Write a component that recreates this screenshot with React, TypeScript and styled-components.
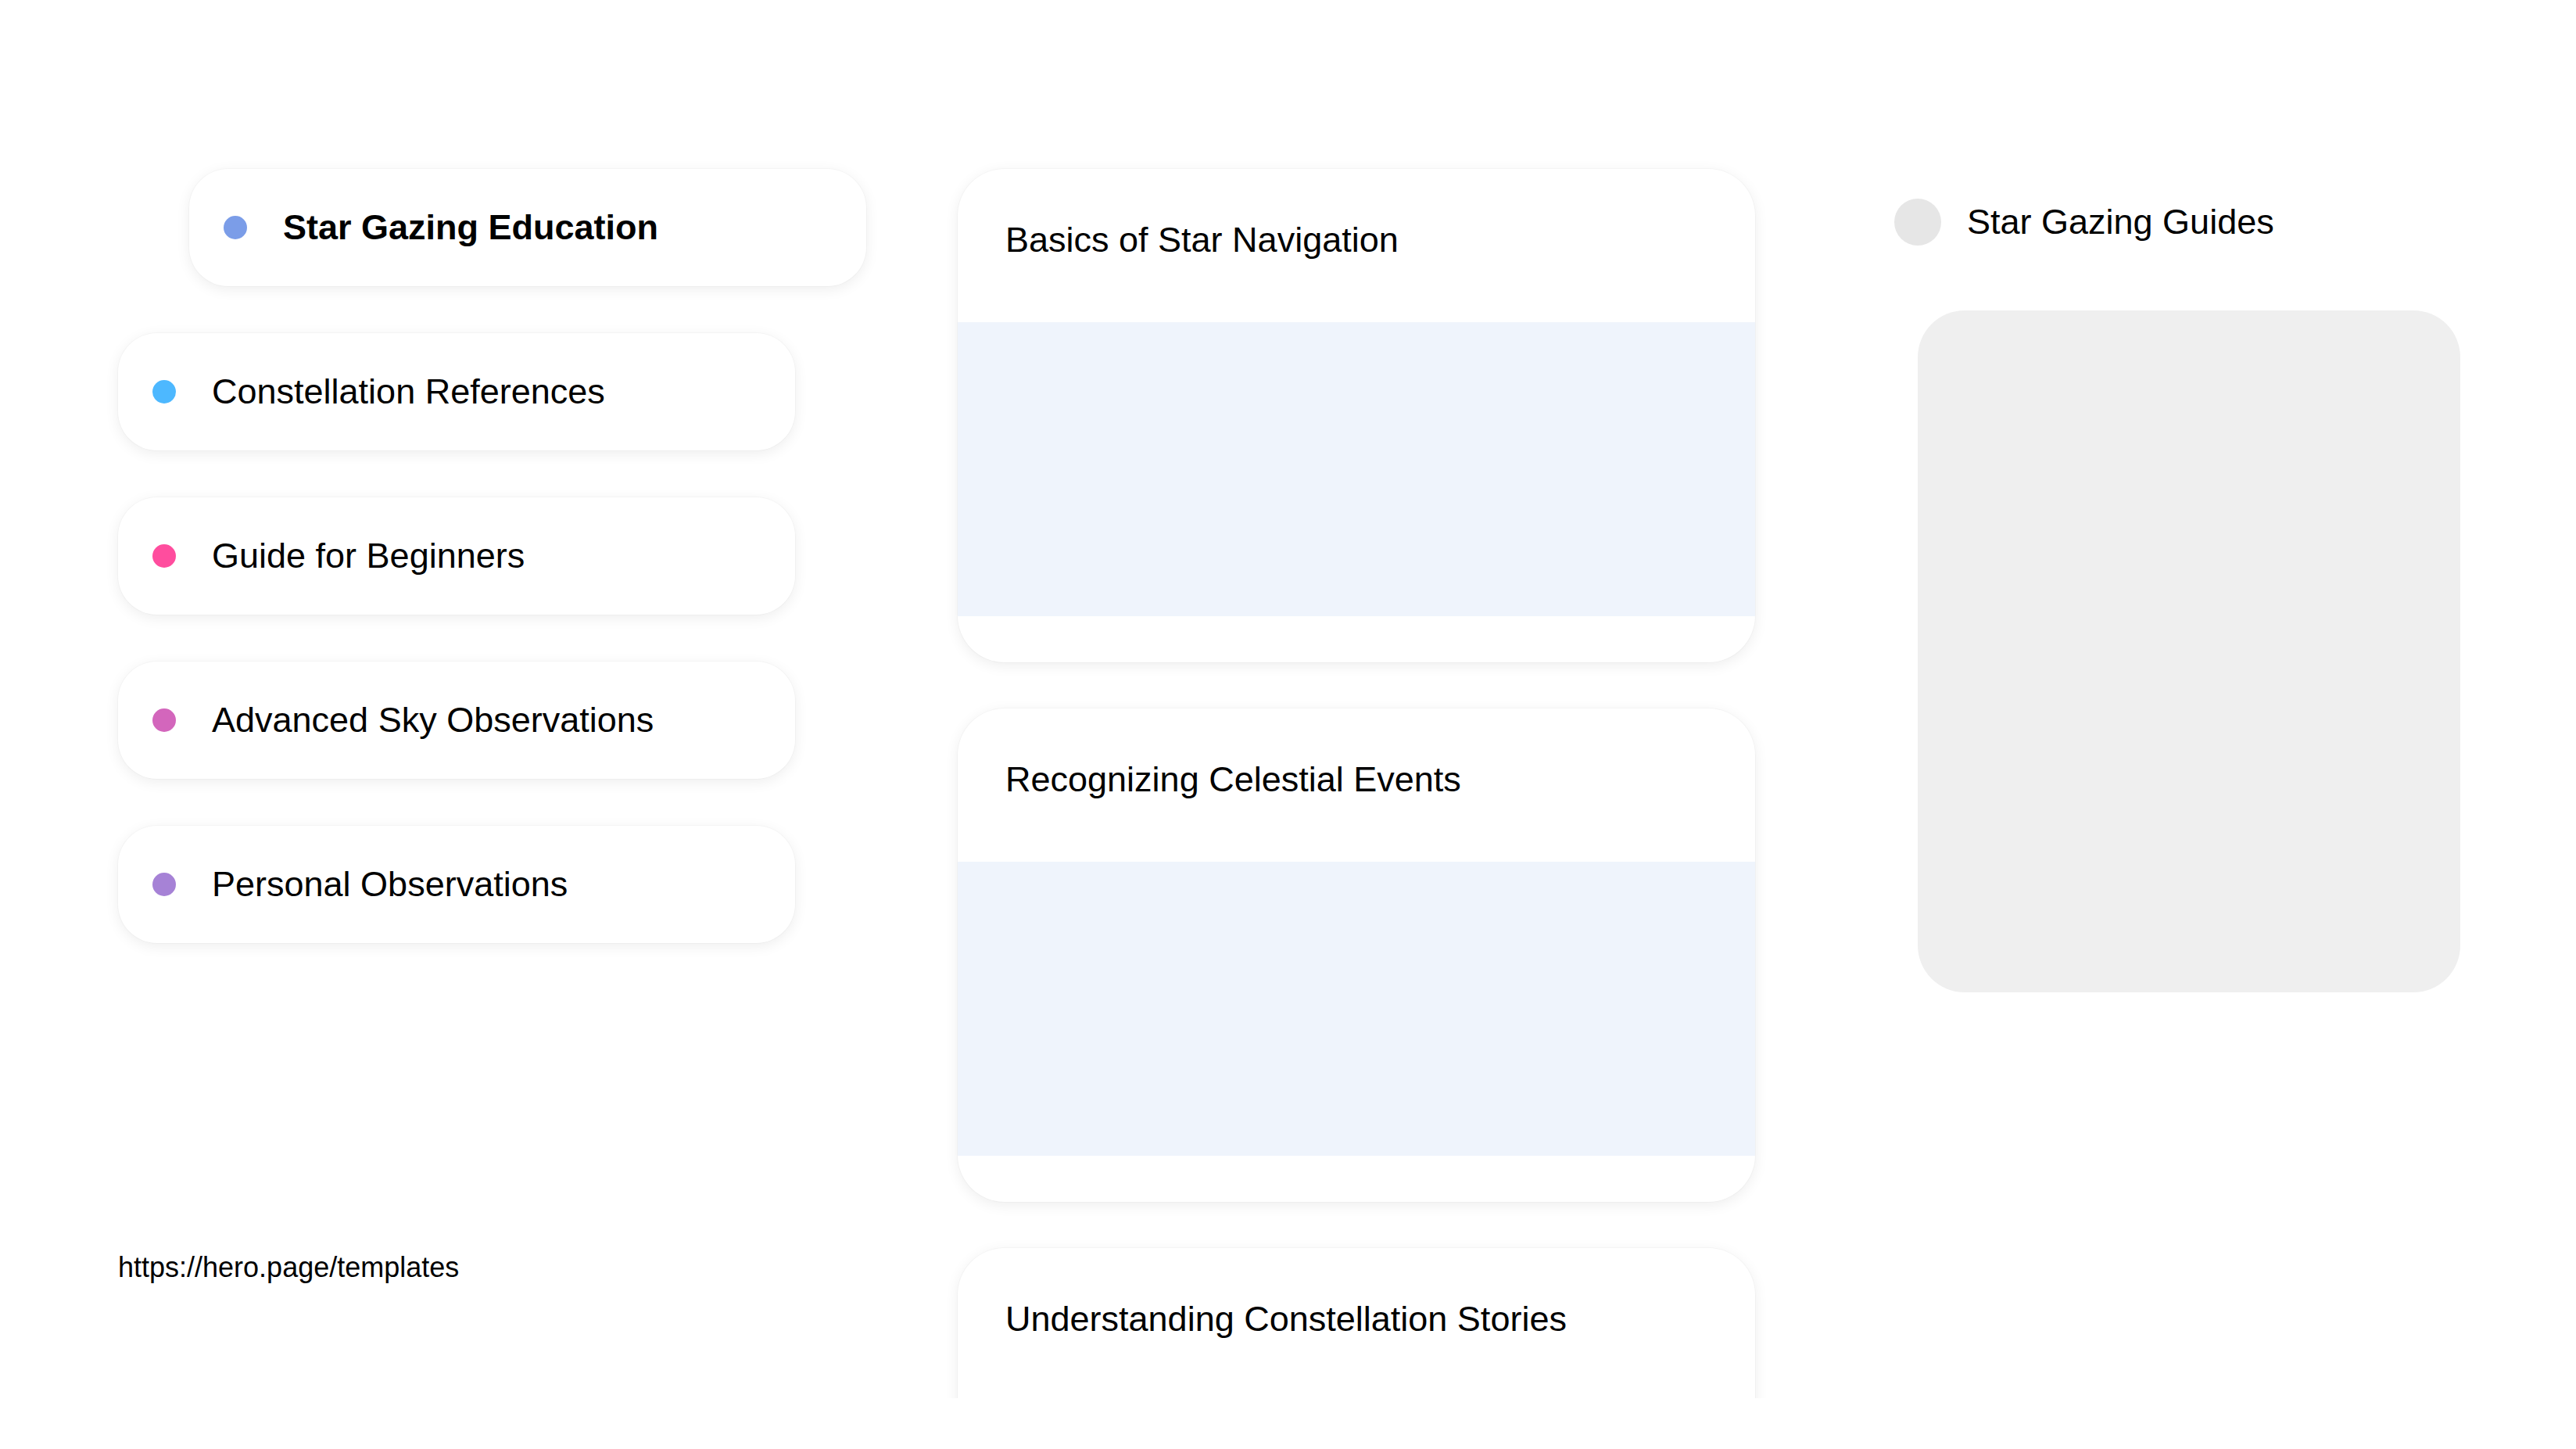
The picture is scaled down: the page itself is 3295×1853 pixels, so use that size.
import styled, { createGlobalStyle } from 'styled-components';

const GlobalStyle = createGlobalStyle`
  * {
    box-sizing: border-box;
  }
  html, body {
    margin: 0;
    padding: 0;
    background: #ffffff;
    font-family: 'Liberation Sans', Arial, sans-serif;
    color: #000000;
  }
`;

const Page = styled.main`
  height: 100vh;
  padding: 216px 146px 65px 151px;
  display: flex;
  align-items: stretch;
`;

const LeftColumn = styled.nav`
  width: 958px;
  flex: none;
  display: flex;
  flex-direction: column;
`;

const PillList = styled.ul`
  list-style: none;
  margin: 0;
  padding: 0;
  display: flex;
  flex-direction: column;
  gap: 60px;
`;

const Pill = styled.li<{ $active?: boolean }>`
  width: 866px;
  height: 150px;
  margin-left: ${(p) => (p.$active ? '91px' : '0')};
  padding: 0 44px;
  display: flex;
  align-items: center;
  gap: 46px;
  background: #ffffff;
  border-radius: 50px;
  box-shadow: 0 0 0 1px rgba(0, 0, 0, 0.025), 0 4px 18px rgba(0, 0, 0, 0.07);
  font-size: 45px;
  font-weight: ${(p) => (p.$active ? 700 : 400)};
`;

const Dot = styled.span<{ $color: string }>`
  width: 30px;
  height: 30px;
  flex: none;
  border-radius: 50%;
  background: ${(p) => p.$color};
`;

const FooterLink = styled.a`
  margin-top: auto;
  margin-bottom: 146px;
  font-size: 36px;
  color: #000000;
  text-decoration: none;
`;

/* the extra 30px round the cards keeps their shadows inside the clip */
const MiddleColumn = styled.section`
  width: 1080px;
  flex: none;
  margin: -30px 148px 0 86px;
  padding: 30px 30px 0;
  overflow: hidden;
  display: flex;
  flex-direction: column;
  gap: 59px;
`;

const Card = styled.article`
  flex: none;
  width: 1020px;
  height: 631px;
  background: #ffffff;
  border-radius: 60px;
  overflow: hidden;
  box-shadow: 0 0 0 1px rgba(0, 0, 0, 0.025), 0 4px 18px rgba(0, 0, 0, 0.07);
  display: flex;
  flex-direction: column;
`;

const CardHeader = styled.header`
  height: 196px;
  padding: 65px 61px 0;
`;

const CardTitle = styled.h3`
  margin: 0;
  font-size: 45px;
  font-weight: 400;
  line-height: 52px;
`;

const CardMedia = styled.div`
  height: 376px;
  background: #eff4fc;
`;

const RightColumn = styled.aside`
  width: 726px;
  flex: none;
  padding-top: 38px;
  display: flex;
  flex-direction: column;
`;

const GuideHeader = styled.div`
  display: flex;
  align-items: center;
  gap: 33px;
  height: 60px;
`;

const Avatar = styled.span`
  width: 60px;
  height: 60px;
  border-radius: 50%;
  background: #e6e6e6;
  flex: none;
`;

const GuideTitle = styled.h2`
  margin: 0;
  font-size: 45px;
  font-weight: 400;
`;

const GuidePanel = styled.div`
  margin: 83px 0 0 30px;
  width: 694px;
  height: 872px;
  border-radius: 60px;
  background: #efefef;
`;

const topics = [
  { label: 'Star Gazing Education', color: '#7b9de8', active: true },
  { label: 'Constellation References', color: '#4db8ff' },
  { label: 'Guide for Beginners', color: '#ff4d9e' },
  { label: 'Advanced Sky Observations', color: '#d366bc' },
  { label: 'Personal Observations', color: '#a682d6' },
];

const lessons = [
  'Basics of Star Navigation',
  'Recognizing Celestial Events',
  'Understanding Constellation Stories',
];

export default function App() {
  return (
    <>
      <GlobalStyle />
      <Page>
        <LeftColumn>
          <PillList>
            {topics.map((t) => (
              <Pill key={t.label} $active={t.active}>
                <Dot $color={t.color} />
                {t.label}
              </Pill>
            ))}
          </PillList>
          <FooterLink href="https://hero.page/templates">https://hero.page/templates</FooterLink>
        </LeftColumn>

        <MiddleColumn>
          {lessons.map((title) => (
            <Card key={title}>
              <CardHeader>
                <CardTitle>{title}</CardTitle>
              </CardHeader>
              <CardMedia />
            </Card>
          ))}
        </MiddleColumn>

        <RightColumn>
          <GuideHeader>
            <Avatar />
            <GuideTitle>Star Gazing Guides</GuideTitle>
          </GuideHeader>
          <GuidePanel />
        </RightColumn>
      </Page>
    </>
  );
}
